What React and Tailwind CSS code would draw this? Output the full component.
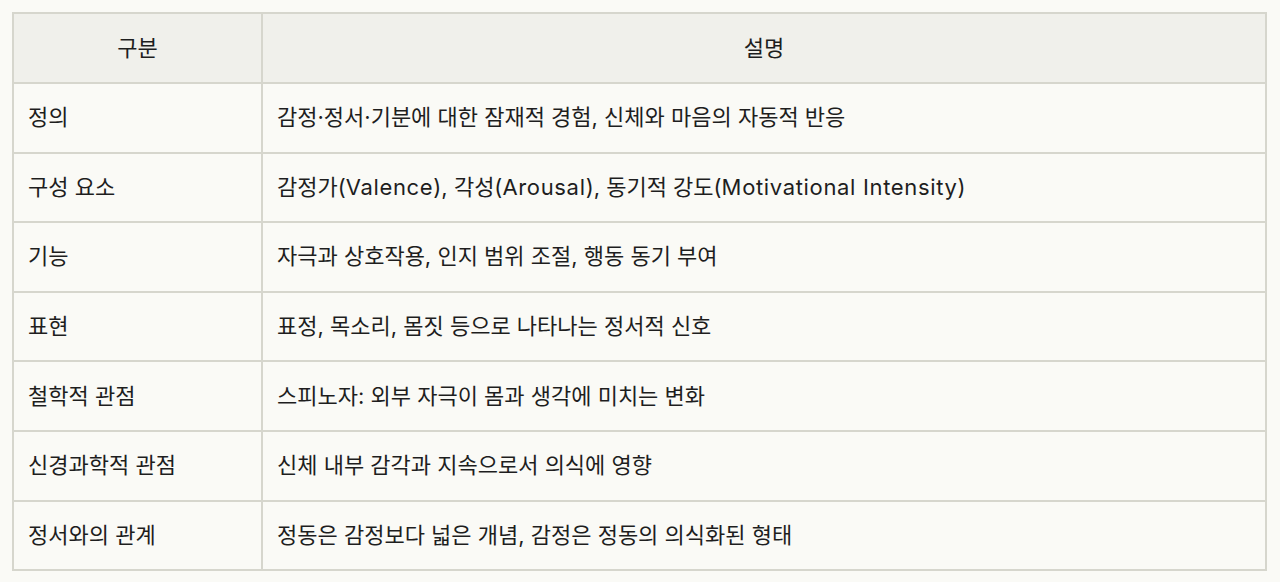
import React from "react";

const Latin = ({ children }) => (
  <span className="tracking-[0.03em]">{children}</span>
);

const rows = [
  ["정의", "감정·정서·기분에 대한 잠재적 경험, 신체와 마음의 자동적 반응"],
  [
    "구성 요소",
    <>
      감정가(<Latin>Valence</Latin>), 각성(<Latin>Arousal</Latin>), 동기적 강도(
      <Latin>Motivational Intensity</Latin>)
    </>,
  ],
  ["기능", "자극과 상호작용, 인지 범위 조절, 행동 동기 부여"],
  ["표현", "표정, 목소리, 몸짓 등으로 나타나는 정서적 신호"],
  ["철학적 관점", "스피노자: 외부 자극이 몸과 생각에 미치는 변화"],
  ["신경과학적 관점", "신체 내부 감각과 지속으로서 의식에 영향"],
  ["정서와의 관계", "정동은 감정보다 넓은 개념, 감정은 정동의 의식화된 형태"],
];

export default function App() {
  return (
    <div
      className="min-h-[582px] bg-[#fafaf6] px-3 pt-3 text-[22px] text-[#1e1e1e]"
      style={{ fontFamily: 'Inter, "Noto Sans CJK KR", sans-serif' }}
    >
      <table className="w-[1255px] border-collapse border-2 border-[#d6d6cd]">
        <thead>
          <tr className="h-[70px] bg-[#f0f0eb]">
            <th className="w-[249px] border-2 border-[#d6d6cd] font-normal">구분</th>
            <th className="border-2 border-[#d6d6cd] font-normal">설명</th>
          </tr>
        </thead>
        <tbody>
          {rows.map(([k, v]) => (
            <tr key={k} className="h-[69.6px]">
              <td className="border-2 border-[#d6d6cd] px-[14px] text-left">{k}</td>
              <td className="border-2 border-[#d6d6cd] px-[14px] text-left">{v}</td>
            </tr>
          ))}
        </tbody>
      </table>
    </div>
  );
}
